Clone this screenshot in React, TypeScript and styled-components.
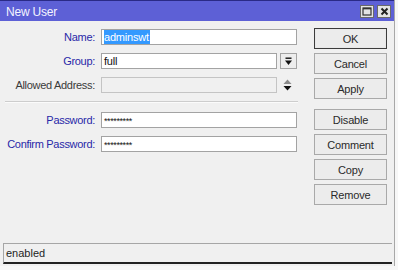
import React from "react";
import styled, { createGlobalStyle } from "styled-components";

const GlobalStyle = createGlobalStyle`
  html, body {
    margin: 0;
    padding: 0;
    background: #f7f7f7;
  }
  body {
    font-family: "Liberation Sans", Arial, sans-serif;
    font-size: 11px;
  }
`;

const Window = styled.div`
  width: 394px;
  height: 266px;
  background: #f0f0f0;
  border-right: 1px solid #a8a8a8;
  display: flex;
  flex-direction: column;
  overflow: hidden;
`;

const TitleBar = styled.div`
  height: 21px;
  box-sizing: border-box;
  border-top: 1px solid #2a2a86;
  background: #5d60d6;
  display: flex;
  align-items: center;
  padding: 0 3px 0 6px;
  color: #f4f4ff;
  font-size: 12px;
`;

const TitleText = styled.span`
  flex: 1;
  padding-top: 1px;
  letter-spacing: -0.2px;
`;

const TitleButton = styled.div`
  width: 12px;
  height: 11px;
  margin-left: 3px;
  background: #e4e4e4;
  border: 1px solid #6a6a6a;
  display: flex;
  align-items: center;
  justify-content: center;
`;

const Body = styled.div`
  flex: 1;
  display: flex;
  padding-top: 8px;
`;

const Form = styled.div`
  width: 298px;
  display: flex;
  flex-direction: column;
`;

const Row = styled.div`
  display: flex;
  align-items: center;
  height: 16px;
  margin-bottom: 8px;
`;

const Label = styled.label<{ $disabled?: boolean }>`
  width: 95px;
  text-align: right;
  color: ${(p) => (p.$disabled ? "#3a3a3a" : "#2828a8")};
  letter-spacing: -0.3px;
  white-space: nowrap;
`;

const Field = styled.div<{ $width: number; $disabled?: boolean }>`
  box-sizing: border-box;
  margin-left: 6px;
  width: ${(p) => p.$width}px;
  height: 16px;
  border: 1px solid ${(p) => (p.$disabled ? "#c4c4c4" : "#a3a3a3")};
  background: ${(p) => (p.$disabled ? "#f0f0f0" : "#ffffff")};
  display: flex;
  align-items: center;
  padding-left: 2px;
  color: #111;
  letter-spacing: -0.2px;
`;

const Selected = styled.span`
  background: #3399ff;
  color: #fff;
  padding: 1px 1px 1px 0;
`;

const Masked = styled.span`
  font-size: 9px;
  letter-spacing: -0.4px;
  padding-top: 2px;
`;

const DropButton = styled.div`
  box-sizing: border-box;
  width: 17px;
  height: 16px;
  margin-left: 3px;
  border: 1px solid #a3a3a3;
  background: #ededed;
  display: flex;
  align-items: center;
  justify-content: center;
`;

const Spinner = styled.div`
  width: 20px;
  display: flex;
  justify-content: center;
`;

const Separator = styled.div`
  margin: 0 0 9px 5px;
  height: 0;
  border-top: 1px solid #cdcdcd;
  border-bottom: 1px solid #fbfbfb;
`;

const Buttons = styled.div`
  margin-left: 16px;
  width: 73px;
  display: flex;
  flex-direction: column;
  gap: 4px;
  margin-top: -1px;
`;

const Button = styled.button<{ $default?: boolean; $gap?: boolean }>`
  box-sizing: border-box;
  height: 21px;
  width: 73px;
  margin: 0;
  margin-top: ${(p) => (p.$gap ? "6px" : "0")};
  padding: 0;
  font-family: inherit;
  font-size: 11px;
  letter-spacing: -0.2px;
  color: #2a2a2a;
  background: #ececec;
  border: 1px solid ${(p) => (p.$default ? "#3c3c3c" : "#a9a9a9")};
  box-shadow: ${(p) => (p.$default ? "inset 0 0 0 1px #e8e8e8" : "none")};
  border-radius: 0;
`;

const StatusBar = styled.div`
  box-sizing: border-box;
  margin: 0 2px 2px 3px;
  height: 21px;
  border-top: 1px solid #a6a6a6;
  border-left: 1px solid #a6a6a6;
  border-bottom: 2px solid #222;
  display: flex;
  align-items: center;
  padding-left: 2px;
  color: #1e1e1e;
`;

export default function App() {
  return (
    <>
      <GlobalStyle />
      <Window>
        <TitleBar>
          <TitleText>New User</TitleText>
          <TitleButton>
            <svg width="10" height="9" viewBox="0 0 10 9">
              <rect x="1" y="1" width="8" height="7" fill="none" stroke="#333" strokeWidth="1.2" />
              <line x1="1" y1="1.6" x2="9" y2="1.6" stroke="#333" strokeWidth="1.5" />
            </svg>
          </TitleButton>
          <TitleButton>
            <svg width="9" height="9" viewBox="0 0 9 9">
              <path d="M1.5 1.5 L7.5 7.5 M7.5 1.5 L1.5 7.5" stroke="#222" strokeWidth="2" />
            </svg>
          </TitleButton>
        </TitleBar>
        <Body>
          <Form>
            <Row>
              <Label>Name:</Label>
              <Field $width={196}>
                <Selected>adminswt</Selected>
              </Field>
            </Row>
            <Row>
              <Label>Group:</Label>
              <Field $width={176}>full</Field>
              <DropButton>
                <svg width="9" height="9" viewBox="0 0 9 9">
                  <rect x="1.5" y="0.5" width="6" height="1.4" fill="#111" />
                  <path d="M1 3.5 H8 L4.5 8 Z" fill="#111" />
                </svg>
              </DropButton>
            </Row>
            <Row>
              <Label $disabled>Allowed Address:</Label>
              <Field $width={176} $disabled />
              <Spinner>
                <svg width="9" height="12" viewBox="0 0 9 12">
                  <path d="M4.5 0.5 L8.5 5 H0.5 Z" fill="#8a8a8a" />
                  <path d="M0.5 7 H8.5 L4.5 11.5 Z" fill="#111" />
                </svg>
              </Spinner>
            </Row>
            <Separator />
            <Row>
              <Label>Password:</Label>
              <Field $width={196}>
                <Masked>*********</Masked>
              </Field>
            </Row>
            <Row>
              <Label>Confirm Password:</Label>
              <Field $width={196}>
                <Masked>*********</Masked>
              </Field>
            </Row>
          </Form>
          <Buttons>
            <Button $default>OK</Button>
            <Button>Cancel</Button>
            <Button>Apply</Button>
            <Button $gap>Disable</Button>
            <Button>Comment</Button>
            <Button>Copy</Button>
            <Button>Remove</Button>
          </Buttons>
        </Body>
        <StatusBar>enabled</StatusBar>
      </Window>
    </>
  );
}
